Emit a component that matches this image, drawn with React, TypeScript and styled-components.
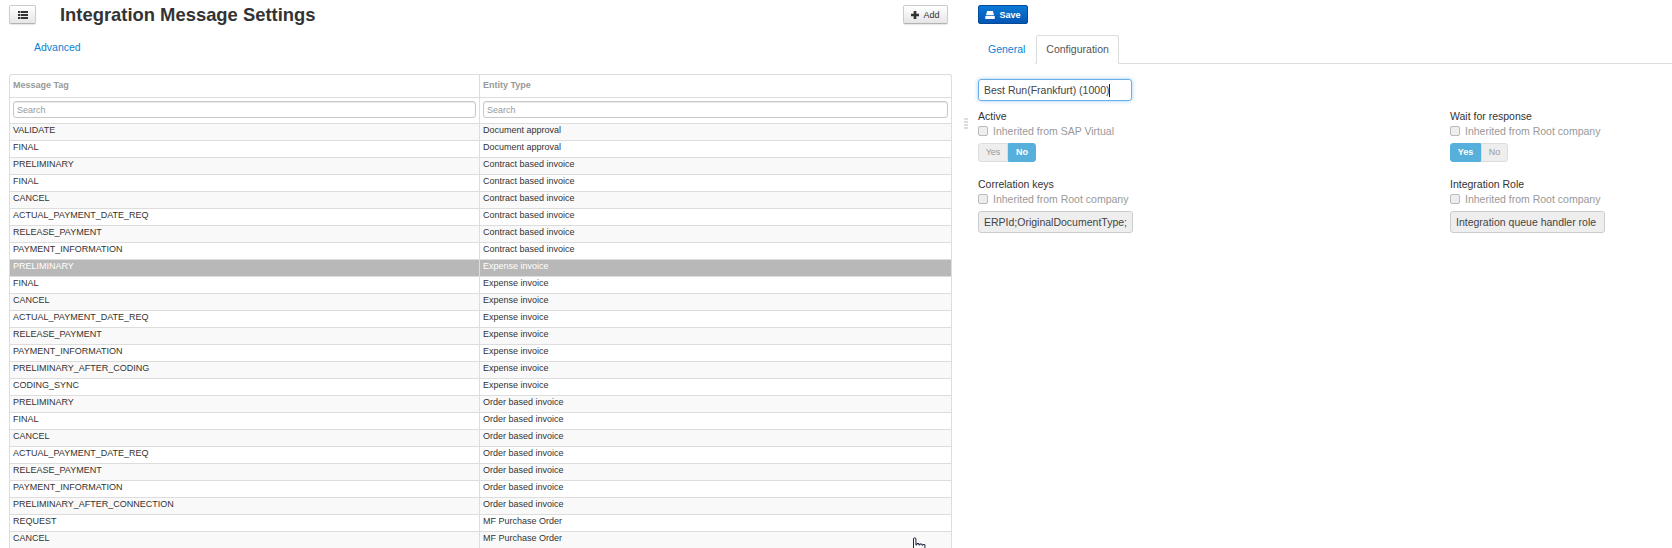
import React from 'react';
import styled, { createGlobalStyle } from 'styled-components';

const rows: [string, string][] = [
  ['VALIDATE', 'Document approval'],
  ['FINAL', 'Document approval'],
  ['PRELIMINARY', 'Contract based invoice'],
  ['FINAL', 'Contract based invoice'],
  ['CANCEL', 'Contract based invoice'],
  ['ACTUAL_PAYMENT_DATE_REQ', 'Contract based invoice'],
  ['RELEASE_PAYMENT', 'Contract based invoice'],
  ['PAYMENT_INFORMATION', 'Contract based invoice'],
  ['PRELIMINARY', 'Expense invoice'],
  ['FINAL', 'Expense invoice'],
  ['CANCEL', 'Expense invoice'],
  ['ACTUAL_PAYMENT_DATE_REQ', 'Expense invoice'],
  ['RELEASE_PAYMENT', 'Expense invoice'],
  ['PAYMENT_INFORMATION', 'Expense invoice'],
  ['PRELIMINARY_AFTER_CODING', 'Expense invoice'],
  ['CODING_SYNC', 'Expense invoice'],
  ['PRELIMINARY', 'Order based invoice'],
  ['FINAL', 'Order based invoice'],
  ['CANCEL', 'Order based invoice'],
  ['ACTUAL_PAYMENT_DATE_REQ', 'Order based invoice'],
  ['RELEASE_PAYMENT', 'Order based invoice'],
  ['PAYMENT_INFORMATION', 'Order based invoice'],
  ['PRELIMINARY_AFTER_CONNECTION', 'Order based invoice'],
  ['REQUEST', 'MF Purchase Order'],
  ['CANCEL', 'MF Purchase Order'],
];

const SELECTED_ROW = 8;

const App = () => {
  return (
    <Page>
      <GlobalStyle />
      <LeftPanel>
        <HeaderBar>
          <GreyButton $width={27} aria-label="Toggle list">
            <svg width="10" height="8" viewBox="0 0 10 8" fill="#333">
              <path d="M0 0h2v2H0zM2.6 0H10v2H2.6zM0 3h2v2H0zM2.6 3H10v2H2.6zM0 6h2v2H0zM2.6 6H10v2H2.6z" />
            </svg>
          </GreyButton>
          <Title>Integration Message Settings</Title>
          <GreyButton $width={45}>
            <svg width="8" height="8" viewBox="0 0 9 9" fill="#333">
              <path d="M3 0h3v3h3v3H6v3H3V6H0V3h3z" />
            </svg>
            Add
          </GreyButton>
        </HeaderBar>
        <AdvancedLink>Advanced</AdvancedLink>
        <TableBox>
          <HeadRow>
            <HeadCell>Message Tag</HeadCell>
            <HeadCell>Entity Type</HeadCell>
          </HeadRow>
          <SearchRow>
            <SearchCell>
              <SearchInput placeholder="Search" readOnly />
            </SearchCell>
            <SearchCell>
              <SearchInput placeholder="Search" readOnly />
            </SearchCell>
          </SearchRow>
          {rows.map(([tag, type], i) => (
            <Row key={i} $odd={i % 2 === 0} $selected={i === SELECTED_ROW}>
              <Cell>{tag}</Cell>
              <Cell>{type}</Cell>
            </Row>
          ))}
        </TableBox>
      </LeftPanel>

      <Splitter>
        <SplitterDots />
      </Splitter>

      <RightPanel>
        <SaveButton>
          <svg width="10" height="8" viewBox="0 0 13 11" fill="#fff">
            <path d="M2.5 0h8L12 6H1zM0 7h13v4H0z" />
          </svg>
          Save
        </SaveButton>
        <Tabs>
          <Tab>General</Tab>
          <Tab $active>Configuration</Tab>
        </Tabs>
        <CompanyField>
          Best Run(Frankfurt) (1000)
          <Caret />
        </CompanyField>
        <FormGrid>
          <Field>
            <FieldLabel>Active</FieldLabel>
            <Inherit>
              <Check />
              Inherited from SAP Virtual
            </Inherit>
            <Toggle>
              <ToggleOption $width={30}>Yes</ToggleOption>
              <ToggleOption $width={28} $on>No</ToggleOption>
            </Toggle>
          </Field>
          <Field>
            <FieldLabel>Wait for response</FieldLabel>
            <Inherit>
              <Check />
              Inherited from Root company
            </Inherit>
            <Toggle>
              <ToggleOption $width={31} $on>Yes</ToggleOption>
              <ToggleOption $width={27}>No</ToggleOption>
            </Toggle>
          </Field>
          <Field>
            <FieldLabel>Correlation keys</FieldLabel>
            <Inherit>
              <Check />
              Inherited from Root company
            </Inherit>
            <ReadOnlyValue>ERPId;OriginalDocumentType;</ReadOnlyValue>
          </Field>
          <Field>
            <FieldLabel>Integration Role</FieldLabel>
            <Inherit>
              <Check />
              Inherited from Root company
            </Inherit>
            <ReadOnlyValue>Integration queue handler role</ReadOnlyValue>
          </Field>
        </FormGrid>
      </RightPanel>

      <HandCursor width="14" height="14" viewBox="0 0 14 14" fill="#fff" stroke="#1c2340" strokeWidth="1">
        <path d="M1.5 14V2a1.2 1.2 0 0 1 2.4 0v6h1V6.5h2V8h1V7h2v1.2h1V7.6h2V14" />
      </HandCursor>
    </Page>
  );
};

const GlobalStyle = createGlobalStyle`
  html, body {
    margin: 0;
    padding: 0;
    background: #fff;
  }
  body {
    font-family: "Liberation Sans", Arial, sans-serif;
    color: #333;
  }
`;

const Page = styled.div`
  position: relative;
  display: flex;
  width: 1672px;
  height: 548px;
  overflow: hidden;
`;

const LeftPanel = styled.div`
  width: 944px;
  margin-left: 9px;
  flex-shrink: 0;
`;

const HeaderBar = styled.div`
  display: flex;
  align-items: flex-start;
  height: 40px;
  padding-top: 5px;
  box-sizing: border-box;
  padding-right: 5px;
`;

const GreyButton = styled.button<{ $width: number }>`
  display: flex;
  align-items: center;
  justify-content: center;
  gap: 4px;
  width: ${props => props.$width}px;
  height: 19px;
  padding: 0;
  font: 9px "Liberation Sans", Arial, sans-serif;
  color: #333;
  background: linear-gradient(#fff, #e6e6e6);
  border: 1px solid #ccc;
  border-bottom-color: #b3b3b3;
  border-radius: 2px;
  box-shadow: 0 1px 1px rgba(0, 0, 0, 0.1);
`;

const Title = styled.h1`
  flex: 1;
  margin: -1px 0 0 24px;
  font-size: 18.4px;
  line-height: 22px;
  font-weight: 700;
  color: #333;
`;

const AdvancedLink = styled.a`
  display: block;
  margin-left: 25px;
  font-size: 10.5px;
  line-height: 14px;
  color: #0b7fd4;
`;

const TableBox = styled.div`
  margin-top: 20px;
  box-sizing: border-box;
  width: 943px;
  border: 1px solid #ddd;
  border-bottom: 0;
  border-radius: 3px 3px 0 0;
`;

const columns = `
  display: grid;
  grid-template-columns: 469px 1fr;
`;

const HeadRow = styled.div`
  ${columns}
  height: 22px;
  border-bottom: 1px solid #ddd;
`;

const HeadCell = styled.div`
  padding-left: 3px;
  font-size: 9px;
  font-weight: 700;
  line-height: 21px;
  color: #999;
  & + & {
    border-left: 1px solid #ddd;
  }
`;

const SearchRow = styled.div`
  ${columns}
  height: 25px;
  border-bottom: 1px solid #ddd;
`;

const SearchCell = styled.div`
  padding: 3px 3px 0 3px;
  box-sizing: border-box;
  & + & {
    border-left: 1px solid #ddd;
  }
`;

const SearchInput = styled.input`
  display: block;
  width: 100%;
  height: 17px;
  box-sizing: border-box;
  padding: 0 3px;
  font: 9px "Liberation Sans", Arial, sans-serif;
  background: #fff;
  border: 1px solid #c8c8c8;
  border-radius: 3px;
  box-shadow: inset 0 1px 1px rgba(0, 0, 0, 0.08);
  &::placeholder {
    color: #999;
  }
`;

const Row = styled.div<{ $odd: boolean; $selected: boolean }>`
  ${columns}
  height: 17px;
  box-sizing: border-box;
  border-bottom: 1px solid #ddd;
  font-size: 9px;
  line-height: 13px;
  color: ${props => (props.$selected ? '#fff' : '#333')};
  background: ${props => (props.$selected ? '#b8b8b8' : props.$odd ? '#f9f9f9' : '#fff')};
`;

const Cell = styled.div`
  padding-left: 3px;
  white-space: nowrap;
  & + & {
    border-left: 1px solid #ddd;
  }
`;

const Splitter = styled.div`
  display: flex;
  justify-content: center;
  width: 25px;
  flex-shrink: 0;
`;

const SplitterDots = styled.div`
  width: 4px;
  height: 11px;
  margin-top: 118px;
  background: repeating-linear-gradient(#ddd 0 2px, transparent 2px 3px);
`;

const RightPanel = styled.div`
  flex: 1;
  min-width: 0;
  padding-top: 5px;
`;

const SaveButton = styled.button`
  display: flex;
  align-items: center;
  justify-content: center;
  gap: 4px;
  width: 50px;
  height: 19px;
  padding: 0;
  font: 700 9px "Liberation Sans", Arial, sans-serif;
  color: #fff;
  background: linear-gradient(#0a7ad6, #0556b3);
  border: 1px solid #04499a;
  border-radius: 2px;
`;

const Tabs = styled.div`
  display: flex;
  align-items: flex-end;
  height: 40px;
  box-sizing: border-box;
  border-bottom: 1px solid #ddd;
`;

const Tab = styled.div<{ $active?: boolean }>`
  height: 29px;
  box-sizing: border-box;
  padding: 0 9px;
  margin-bottom: -1px;
  margin-left: ${props => (props.$active ? '1px' : '0')};
  font-size: 10.5px;
  line-height: 27px;
  color: ${props => (props.$active ? '#555' : '#0b7fd4')};
  background: #fff;
  border: 1px solid ${props => (props.$active ? '#ddd' : 'transparent')};
  border-bottom-color: ${props => (props.$active ? '#fff' : 'transparent')};
  border-radius: 3px 3px 0 0;
`;

const CompanyField = styled.div`
  display: flex;
  align-items: center;
  width: 154px;
  height: 22px;
  margin-top: 15px;
  box-sizing: border-box;
  padding-left: 5px;
  font-size: 10.5px;
  color: #444;
  border: 1px solid #66afe9;
  border-radius: 3px;
  box-shadow: 0 0 4px rgba(102, 175, 233, 0.6);
`;

const Caret = styled.span`
  width: 1px;
  height: 13px;
  background: #222;
`;

const FormGrid = styled.div`
  display: grid;
  grid-template-columns: 472px 1fr;
  grid-auto-rows: 68px;
  margin-top: 8px;
`;

const Field = styled.div`
  display: flex;
  flex-direction: column;
  align-items: flex-start;
`;

const FieldLabel = styled.div`
  font-size: 10.5px;
  line-height: 15px;
  color: #333;
`;

const Inherit = styled.div`
  display: flex;
  align-items: center;
  gap: 5px;
  height: 13px;
  font-size: 10.5px;
  color: #999;
`;

const Check = styled.span`
  width: 8px;
  height: 8px;
  background: #eee;
  border: 1px solid #bbb;
  border-radius: 2px;
`;

const Toggle = styled.div`
  display: flex;
  margin-top: 6px;
  height: 19px;
`;

const ToggleOption = styled.div<{ $width: number; $on?: boolean }>`
  width: ${props => props.$width}px;
  box-sizing: border-box;
  font-size: 9px;
  font-weight: ${props => (props.$on ? 700 : 400)};
  line-height: 17px;
  text-align: center;
  color: ${props => (props.$on ? '#fff' : '#999')};
  background: ${props => (props.$on ? '#57b0dc' : '#eee')};
  border: 1px solid ${props => (props.$on ? '#57b0dc' : '#ddd')};
  &:first-child {
    border-radius: 3px 0 0 3px;
  }
  &:last-child {
    border-radius: 0 3px 3px 0;
  }
`;

const ReadOnlyValue = styled.div`
  box-sizing: border-box;
  width: 155px;
  height: 22px;
  margin-top: 6px;
  padding: 0 5px;
  font-size: 10.5px;
  line-height: 20px;
  white-space: nowrap;
  overflow: hidden;
  color: #444;
  background: #eee;
  border: 1px solid #ccc;
  border-radius: 3px;
`;

const HandCursor = styled.svg`
  position: absolute;
  left: 912px;
  top: 537px;
`;

export default App;
